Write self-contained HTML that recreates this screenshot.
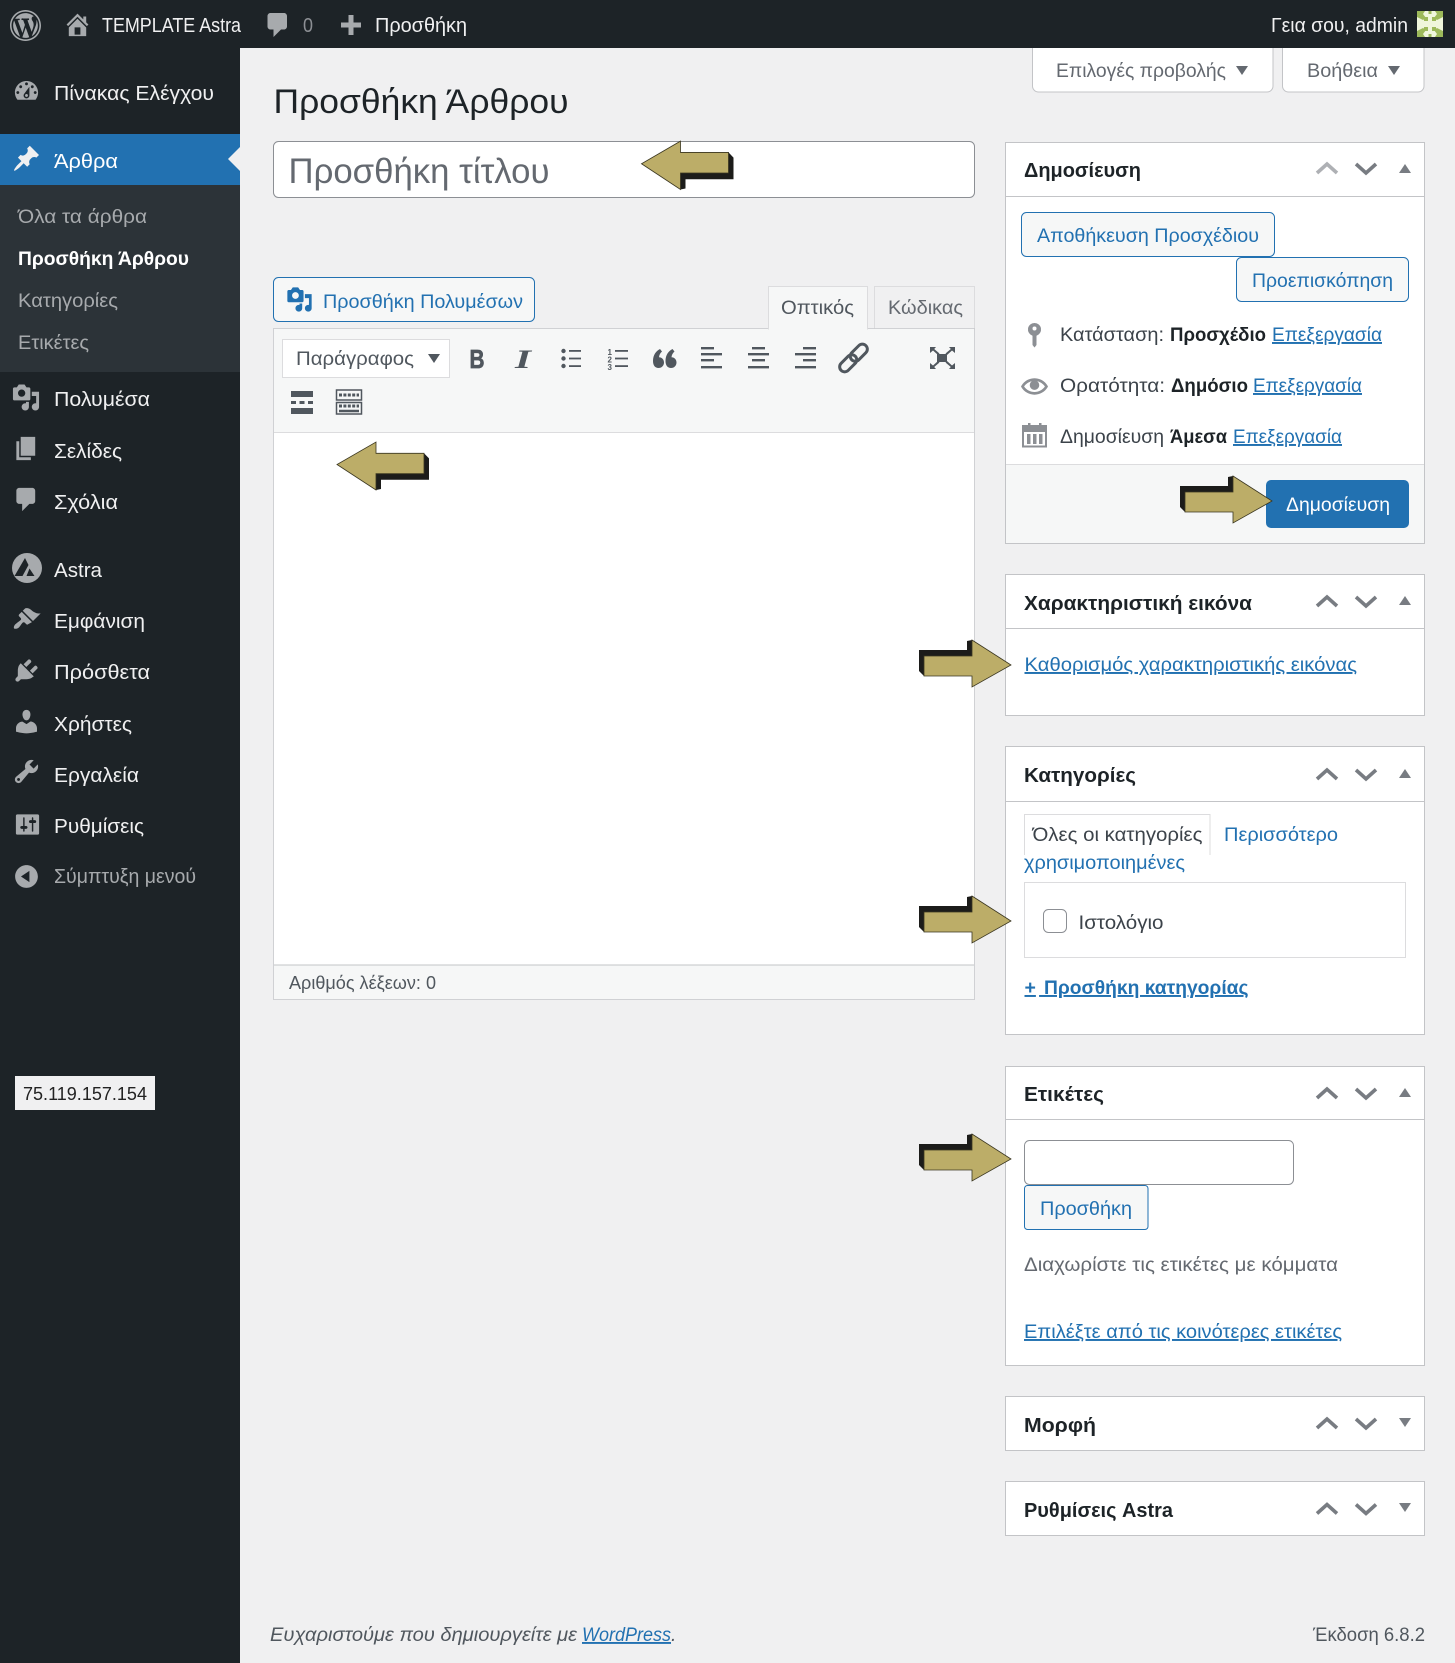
<!DOCTYPE html>
<html lang="el"><head><meta charset="utf-8"><title>Προσθήκη Άρθρου</title>
<style>
html,body{margin:0;padding:0;background:#f0f0f1;width:1455px;height:1663px;overflow:hidden}
svg{display:block;position:absolute;left:0;top:0;filter:blur(.3px)}
text{font-family:"Liberation Sans","Noto Sans CJK JP",sans-serif;font-size:19.5px;white-space:pre}
.w{fill:#f0f0f1;font-size:20px}.g{fill:#a7aaad}.c{fill:#3c434a}.k{fill:#1d2327}.b{font-weight:700}
.l{fill:#2271b1}.u{text-decoration:underline}.m{fill:#50575e}.h{font-weight:700;fill:#1d2327;font-size:20px}
.ic{fill:#a7aaad}
</style></head><body>
<svg width="1455" height="1663" viewBox="0 0 1455 1663" xmlns="http://www.w3.org/2000/svg">
<defs>
<path id="i-wp" d="M20 10c0-5.520-4.480-10-10-10S0 4.480 0 10s4.480 10 10 10 10-4.480 10-10zM10 1.010c4.970 0 8.990 4.020 8.990 8.990s-4.020 8.990-8.990 8.990S1.010 14.970 1.010 10 5.030 1.010 10 1.010zM8.010 14.820L4.960 6.610c.49-.03 1.050-.08 1.050-.08.43-.05.38-1.010-.06-.99 0 0-1.290.1-2.130.1-.15 0-.33 0-.52-.01 1.440-2.170 3.900-3.600 6.700-3.600 2.090 0 3.990.79 5.410 2.090-.6-.08-1.450.35-1.450 1.420 0 .66.38 1.220.79 1.880.31.54.5 1.220.5 2.210 0 1.340-1.270 4.480-1.270 4.480l-2.710-7.500c.48-.03.75-.16.75-.16.43-.05.38-1.100-.05-1.080 0 0-1.300.11-2.140.11-.78 0-2.110-.11-2.110-.11-.43-.02-.48 1.060-.05 1.080l.84.08 1.120 3.040zm6.020 2.150L16.640 10s.67-1.690.39-3.810c.63 1.140.94 2.420.94 3.810 0 2.960-1.560 5.580-3.940 6.970zM2.680 6.770L6.500 17.250c-2.670-1.300-4.470-4.080-4.470-7.250 0-1.160.2-2.230.65-3.230zm7.450 4.530l2.290 6.250c-.75.27-1.570.42-2.420.42-.72 0-1.410-.11-2.060-.3z"/>
<path id="i-home" d="M16 8.500l1.530 1.530-1.060 1.060L10 4.620l-6.470 6.470-1.060-1.060L10 2.500l4 4v-2h2v4zm-6-2.460l6 5.990V18H4v-5.970zM12 17v-5H8v5h4z"/>
<path id="i-cm" d="M5 2h9c1.100 0 2 .9 2 2v7c0 1.100-.9 2-2 2h-2l-5 5v-5H5c-1.100 0-2-.9-2-2V4c0-1.100.9-2 2-2z"/>
<path id="i-media" d="M13 11V4c0-.55-.45-1-1-1h-1.670L9 1H5L3.670 3H2c-.55 0-1 .45-1 1v7c0 .55.45 1 1 1h10c.55 0 1-.45 1-1zM7 4.500c1.380 0 2.500 1.120 2.500 2.500S8.380 9.500 7 9.500 4.500 8.380 4.500 7 5.620 4.500 7 4.500zM14 6h5v10.500c0 1.380-1.120 2.500-2.500 2.500S14 17.880 14 16.500s1.120-2.500 2.500-2.500c.17 0 .34.02.5.05V9h-3V6zm-4 8.050V13h2v3.500c0 1.380-1.120 2.500-2.500 2.500S7 17.880 7 16.500 8.120 14 9.500 14c.17 0 .34.02.5.05z"/>
<g id="arrow">
<path fill="#1c1c1a" d="M0 10H48V1L53 0V17H5V36L0 31Z"/>
<path fill="#bcad68" stroke="#3a3620" stroke-width=".8" d="M5 16H53V0L92 25 53 47V36H5Z"/>
</g>
<g id="up"><path fill="none" stroke="#787c82" stroke-width="3.600" d="M0 10 10 1 20 10"/></g>
<g id="dn"><path fill="none" stroke="#787c82" stroke-width="3.600" d="M0 1 10 10 20 1"/></g>
<path id="q" d="M660 349c-4 2-7 6-7 12 0 4.500 2.300 7 5.500 7s5.500-2.400 5.500-5.500-2.200-5.200-5-5.200c.2-2.300 1.200-4.300 3-5.800z"/>
</defs>

<!-- admin bar + sidebar -->
<rect x="0" y="0" width="1455" height="48" fill="#1d2327"/>
<rect x="0" y="48" width="240" height="1615" fill="#1d2327"/>
<rect x="0" y="134" width="240" height="51" fill="#2271b1"/>
<rect x="0" y="185" width="240" height="187" fill="#2c3338"/>
<path fill="#f0f0f1" d="M228 159 240 147V171Z"/>

<use href="#i-wp" class="ic" transform="translate(10,10) scale(1.55)"/>
<use href="#i-home" class="ic" transform="translate(63,10) scale(1.45)"/>
<text class="w" x="102" y="32" textLength="139" lengthAdjust="spacingAndGlyphs">TEMPLATE Astra</text>
<use href="#i-cm" class="ic" transform="translate(263,10) scale(1.5)"/>
<text x="303" y="32" textLength="10" lengthAdjust="spacingAndGlyphs" style="fill:#8c8f94;font-size:20px">0</text>
<path class="ic" d="M348.500 15h5v7.500h7.500v5h-7.500v7.500h-5v-7.500h-7.500v-5h7.500z"/>
<text class="w" x="375" y="32" textLength="92" lengthAdjust="spacingAndGlyphs">Προσθήκη</text>
<text class="w" x="1271" y="32" textLength="137" lengthAdjust="spacingAndGlyphs">Γεια σου, admin</text>
<rect x="1417" y="11" width="26" height="26" fill="#f0f6dc"/>
<g fill="#9db95a">
<path d="M1417 11h8l-2 3 3 4-3 2-6-3zM1443 11h-8l2 3-3 4 3 2 6-3zM1417 37h8l-2-3 3-4-3-2-6 3zM1443 37h-8l2-3-3-4 3-2 6 3z"/>
<rect x="1424" y="17" width="4" height="4"/><rect x="1432" y="17" width="4" height="4"/><rect x="1424" y="27" width="4" height="4"/><rect x="1432" y="27" width="4" height="4"/>
<rect x="1428.500" y="11" width="3" height="3"/><rect x="1428.500" y="34" width="3" height="3"/>
</g>

<!-- sidebar icons -->
<path class="ic" transform="translate(12,76.600) scale(1.45)" d="M3.760 16h12.480c1.100-1.370 1.760-3.110 1.760-5 0-4.420-3.580-8-8-8s-8 3.580-8 8c0 1.890.66 3.630 1.760 5zM10 4c.55 0 1 .45 1 1s-.45 1-1 1-1-.45-1-1 .45-1 1-1zM6 6c.55 0 1 .45 1 1s-.45 1-1 1-1-.45-1-1 .45-1 1-1zm8 0c.55 0 1 .45 1 1s-.45 1-1 1-1-.45-1-1 .45-1 1-1zm-5.370 5.550L12 7v6c0 1.100-.9 2-2 2s-2-.9-2-2c0-.57.24-1.080.63-1.450zM4 10c.55 0 1 .45 1 1s-.45 1-1 1-1-.45-1-1 .45-1 1-1zm12 0c.55 0 1 .45 1 1s-.45 1-1 1-1-.45-1-1 .45-1 1-1zm-5 3c0-.55-.45-1-1-1s-1 .45-1 1 .45 1 1 1 1-.45 1-1z"/>
<path fill="#f0f0f1" transform="translate(12,144) scale(1.45)" d="M10.440 3.020l1.820-1.820 6.360 6.350-1.830 1.820c-1.050-.68-2.480-.57-3.410.36l-.75.75c-.92.93-1.040 2.350-.35 3.410l-1.830 1.820-2.410-2.410-2.800 2.790c-.42.42-3.380 2.710-3.800 2.290s1.860-3.390 2.280-3.810l2.790-2.790L4.100 9.360l1.830-1.820c1.050.69 2.480.57 3.400-.36l.75-.75c.93-.92 1.050-2.350.36-3.410z"/>
<use href="#i-media" class="ic" transform="translate(11.500,383) scale(1.45)"/>
<path class="ic" transform="translate(12,434) scale(1.45)" d="M6 15V2h10v13H6zm-1 1h8v2H3V5h2v11z"/>
<use href="#i-cm" class="ic" transform="translate(12,485) scale(1.45)"/>
<circle class="ic" cx="27" cy="568" r="15"/>
<path fill="#1d2327" d="M14.500 576 25 558l3.500 7-6 11zM26.500 576l3-7.500 5 7.500z"/>
<path class="ic" transform="translate(12,605) scale(1.45)" d="M14.480 11.060L7.410 3.990l1.500-1.500c.5-.56 2.300-.47 3.510.32 1.210.8 1.430 1.280 2.910 2.100 1.180.64 2.450 1.260 4.450.85zm-.71.71L6.700 4.700 4.930 6.470c-.39.39-.39 1.020 0 1.410l1.060 1.060c.39.39.39 1.030 0 1.420-.6.6-1.430 1.110-2.210 1.690-.35.26-.7.53-1.010.84C1.430 13.710.96 15.650 1.500 16.180c.54.53 2.470.07 3.320-.79.31-.31.58-.66.84-1.010.58-.78 1.090-1.610 1.690-2.210.39-.39 1.020-.39 1.410 0l1.060 1.060c.39.39 1.020.39 1.410 0z"/>
<path class="ic" transform="translate(12,656) scale(1.45)" d="M13.110 4.360L9.870 7.600 8 5.730l3.240-3.240c.35-.34 1.050-.2 1.560.32.52.51.66 1.210.31 1.550zm-8 1.770l.91-1.120 9.010 9.010-1.190.84c-.71.71-2.630 1.160-3.820 1.160H6.140L4.900 17.260c-.59.59-1.540.59-2.120 0-.59-.58-.59-1.530 0-2.120l1.240-1.240v-3.880c0-1.130.4-3.190 1.090-3.890zm7.260 3.970l3.240-3.240c.34-.35 1.040-.21 1.550.31.52.51.66 1.210.31 1.550l-3.240 3.250z"/>
<path class="ic" transform="translate(12,707) scale(1.45)" d="M10 9.250c-2.270 0-2.730-3.440-2.730-3.440C7 4.020 7.820 2 9.970 2c2.160 0 2.980 2.020 2.710 3.810 0 0-.41 3.440-2.680 3.440zm0 2.570L12.720 10c2.390 0 4.520 2.330 4.520 4.530v2.490s-3.650 1.130-7.240 1.130c-3.650 0-7.240-1.130-7.240-1.130v-2.490c0-2.250 1.940-4.480 4.470-4.480z"/>
<path class="ic" transform="translate(12,757) scale(1.45)" d="M16.680 9.770c-1.340 1.340-3.300 1.670-4.950.99l-5.410 6.520c-.99.99-2.590.99-3.580 0s-.99-2.590 0-3.570l6.520-5.420c-.68-1.650-.35-3.610.99-4.950 1.280-1.280 3.120-1.620 4.720-1.060l-2.890 2.890 2.820 2.820 2.860-2.870c.53 1.580.18 3.390-1.080 4.650zM3.810 16.210c.4.39 1.040.39 1.430 0 .4-.4.4-1.040 0-1.430-.39-.4-1.030-.4-1.430 0-.39.39-.39 1.030 0 1.430z"/>
<path class="ic" transform="translate(13,810) scale(1.45)" d="M18 16V4c0-.55-.45-1-1-1H3c-.55 0-1 .45-1 1v12c0 .55.45 1 1 1h14c.55 0 1-.45 1-1zM8 11h1c.55 0 1 .45 1 1s-.45 1-1 1H8v1.500c0 .28-.22.5-.5.5s-.5-.22-.5-.5V13H6c-.55 0-1-.45-1-1s.45-1 1-1h1V5.500c0-.28.22-.5.5-.5s.5.22.5.5V11zm5-2h-1c-.55 0-1-.45-1-1s.45-1 1-1h1V5.500c0-.28.22-.5.5-.5s.5.22.5.5V7h1c.55 0 1 .45 1 1s-.45 1-1 1h-1v5.500c0 .28-.22.5-.5.5s-.5-.22-.5-.5V9z"/>
<path class="ic" transform="translate(12,862) scale(1.45)" d="M10 2.160c4.330 0 7.840 3.510 7.840 7.840s-3.510 7.840-7.840 7.840S2.160 14.330 2.160 10 5.710 2.160 10 2.160zm2 11.720V6.120L6.180 9.970z"/>

<!-- sidebar text -->
<text class="w" x="54" y="100" textLength="160" lengthAdjust="spacingAndGlyphs">Πίνακας Ελέγχου</text>
<text class="w" x="54" y="168" textLength="64" lengthAdjust="spacingAndGlyphs" style="fill:#fff">Άρθρα</text>
<text class="g" x="18" y="223" textLength="129" lengthAdjust="spacingAndGlyphs">Όλα τα άρθρα</text>
<text class="b" x="18" y="265" textLength="171" lengthAdjust="spacingAndGlyphs" style="fill:#fff">Προσθήκη Άρθρου</text>
<text class="g" x="18" y="307" textLength="100" lengthAdjust="spacingAndGlyphs">Κατηγορίες</text>
<text class="g" x="18" y="349" textLength="71" lengthAdjust="spacingAndGlyphs">Ετικέτες</text>
<text class="w" x="54" y="406" textLength="96" lengthAdjust="spacingAndGlyphs">Πολυμέσα</text>
<text class="w" x="54" y="458" textLength="68" lengthAdjust="spacingAndGlyphs">Σελίδες</text>
<text class="w" x="54" y="509" textLength="64" lengthAdjust="spacingAndGlyphs">Σχόλια</text>
<text class="w" x="54" y="577" textLength="48" lengthAdjust="spacingAndGlyphs">Astra</text>
<text class="w" x="54" y="628" textLength="91" lengthAdjust="spacingAndGlyphs">Εμφάνιση</text>
<text class="w" x="54" y="679" textLength="96" lengthAdjust="spacingAndGlyphs">Πρόσθετα</text>
<text class="w" x="54" y="731" textLength="78" lengthAdjust="spacingAndGlyphs">Χρήστες</text>
<text class="w" x="54" y="782" textLength="85" lengthAdjust="spacingAndGlyphs">Εργαλεία</text>
<text class="w" x="54" y="833" textLength="90" lengthAdjust="spacingAndGlyphs">Ρυθμίσεις</text>
<text class="g" x="54" y="883" textLength="142" lengthAdjust="spacingAndGlyphs" style="font-size:20px">Σύμπτυξη μενού</text>

<rect x="15" y="1076" width="140" height="34" fill="#f0f0f1"/>
<text x="23" y="1100" textLength="124" lengthAdjust="spacingAndGlyphs" style="font-size:18px;fill:#222">75.119.157.154</text>

<!-- screen tabs -->
<path fill="#fff" stroke="#c3c4c7" d="M1032.500 48V86a6 6 0 0 0 6 6H1267a6 6 0 0 0 6-6V48"/>
<path fill="#fff" stroke="#c3c4c7" d="M1282.500 48V86a6 6 0 0 0 6 6H1418a6 6 0 0 0 6-6V48"/>
<text x="1056" y="77" textLength="170" lengthAdjust="spacingAndGlyphs" style="fill:#646970">Επιλογές προβολής</text>
<path fill="#646970" d="M1236 66h12l-6 9z"/>
<text x="1307" y="77" textLength="71" lengthAdjust="spacingAndGlyphs" style="fill:#646970">Βοήθεια</text>
<path fill="#646970" d="M1388 66h12l-6 9z"/>

<!-- heading + title -->
<text class="k" x="273.500" y="113" textLength="295" lengthAdjust="spacingAndGlyphs" style="font-size:34px">Προσθήκη Άρθρου</text>
<rect x="273.500" y="141.500" width="701" height="56" rx="5" fill="#fff" stroke="#8c8f94"/>
<text x="288.500" y="183" textLength="261" lengthAdjust="spacingAndGlyphs" style="font-size:35px;fill:#646970">Προσθήκη τίτλου</text>
<use href="#arrow" transform="translate(733.500,189.500) rotate(180) scale(1,1.03)"/>

<!-- media button -->
<rect x="273.500" y="277.500" width="261" height="44" rx="5" fill="#f6f7f7" stroke="#2271b1"/>
<use href="#i-media" class="l" transform="translate(286,286) scale(1.35)" style="fill:#2271b1"/>
<text class="l" x="323" y="308" textLength="200" lengthAdjust="spacingAndGlyphs">Προσθήκη Πολυμέσων</text>

<!-- editor tabs -->
<rect x="874.500" y="286.500" width="100" height="43" fill="#f0f0f1" stroke="#dcdcde"/>
<text x="888" y="314" textLength="75" lengthAdjust="spacingAndGlyphs" style="fill:#646970">Κώδικας</text>

<!-- editor -->
<rect x="273.500" y="328.500" width="701" height="671" fill="#fff" stroke="#c3c4c7" stroke-opacity=".75"/>
<rect x="274" y="329" width="700" height="103" fill="#f6f7f7"/>
<line x1="274" x2="974" y1="432.500" y2="432.500" stroke="#dcdcde"/>
<path fill="#f6f7f7" stroke="#dcdcde" d="M768.500 329.500V286.500H867.500V329.500"/>
<rect x="769" y="325" width="98" height="5" fill="#f6f7f7"/>
<text x="781" y="314" textLength="73" lengthAdjust="spacingAndGlyphs" style="fill:#50575e">Οπτικός</text>

<rect x="282.500" y="339.500" width="167" height="38" fill="#fff" stroke="#dcdcde"/>
<text class="m" x="296" y="365" textLength="118" lengthAdjust="spacingAndGlyphs">Παράγραφος</text>
<path fill="#50575e" d="M428 354h12l-6 9z"/>

<!-- toolbar icons -->
<text x="469.500" y="368" textLength="15" lengthAdjust="spacingAndGlyphs" style="font-size:26px;font-weight:700;fill:#50575e;stroke:#50575e;stroke-width:.7">B</text>
<text x="515" y="368" textLength="16" lengthAdjust="spacingAndGlyphs" style="font-family:'Liberation Serif',serif;font-size:26px;font-weight:700;font-style:italic;fill:#50575e">I</text>
<g fill="#50575e">
<circle cx="563.500" cy="351" r="2.200"/><circle cx="563.500" cy="358.500" r="2.200"/><circle cx="563.500" cy="366" r="2.200"/>
<rect x="569" y="350" width="12" height="1.800"/><rect x="569" y="357.600" width="12" height="1.800"/><rect x="569" y="365.200" width="12" height="1.800"/>
<rect x="615" y="350" width="13" height="1.800"/><rect x="615" y="357.600" width="13" height="1.800"/><rect x="615" y="365.200" width="13" height="1.800"/>
<use href="#q"/><use href="#q" x="12.500"/>
<rect x="701" y="347" width="13" height="2.400"/><rect x="701" y="353" width="21" height="2.400"/><rect x="701" y="359" width="13" height="2.400"/><rect x="701" y="366" width="21" height="2.400"/>
<rect x="752" y="347" width="13" height="2.400"/><rect x="748" y="353" width="21" height="2.400"/><rect x="752" y="359" width="13" height="2.400"/><rect x="748" y="366" width="21" height="2.400"/>
<rect x="803" y="347" width="13" height="2.400"/><rect x="795" y="353" width="21" height="2.400"/><rect x="803" y="359" width="13" height="2.400"/><rect x="795" y="366" width="21" height="2.400"/>
<rect x="937" y="354" width="10" height="8"/>
<path d="M930 347h6l-1.800 2 5.300 4.500-1.500 1.500-5-4.500-3 2.500zM955 347h-6l1.800 2-5.300 4.500 1.500 1.500 5-4.500 3 2.500zM930 369h6l-1.800-2 5.300-4.500-1.500-1.500-5 4.500-3-2.500zM955 369h-6l1.800-2-5.300-4.500 1.500-1.500 5 4.500 3-2.500z"/>
<rect x="291" y="391" width="22" height="6"/><rect x="291" y="401" width="5" height="3"/><rect x="299.500" y="401" width="5" height="3"/><rect x="308" y="401" width="5" height="3"/><rect x="291" y="408" width="22" height="6"/>
</g>
<text x="607.500" y="355" style="font-size:8px;font-weight:700;fill:#50575e">1</text><text x="607.500" y="362.500" style="font-size:8px;font-weight:700;fill:#50575e">2</text><text x="607.500" y="370" style="font-size:8px;font-weight:700;fill:#50575e">3</text>
<g fill="none" stroke="#50575e" stroke-width="3" transform="rotate(-45 853.500 358)"><rect x="836" y="353" width="20" height="10" rx="5"/><rect x="851" y="353" width="20" height="10" rx="5"/></g>
<g fill="none" stroke="#50575e" stroke-width="1.500"><rect x="336.500" y="390" width="25" height="10"/><rect x="336.500" y="402.500" width="25" height="11.500"/></g>
<g fill="none" stroke="#50575e" stroke-width="3"><path stroke-dasharray="3 1.400" d="M339 395H359M339 406H359"/></g>
<path stroke="#50575e" stroke-width="2.500" d="M339 411H359"/>
<use href="#arrow" transform="translate(429,490) rotate(180) scale(1,1.02)"/>

<rect x="274" y="965" width="700" height="34" fill="#f6f7f7"/>
<line x1="274" x2="974" y1="965" y2="965" stroke="#c3c4c7"/>
<text class="m" x="289" y="989" textLength="147" lengthAdjust="spacingAndGlyphs" style="font-size:18px">Αριθμός λέξεων: 0</text>

<!-- Publish box -->
<rect x="1005.500" y="142.500" width="419" height="401" fill="#fff" stroke="#c3c4c7"/>
<line x1="1006" x2="1424" y1="196.500" y2="196.500" stroke="#c3c4c7"/>
<text class="h" x="1024" y="177" textLength="117" lengthAdjust="spacingAndGlyphs">Δημοσίευση</text>
<g transform="translate(1317,163)"><use href="#up" style="opacity:.6"/></g>
<use href="#dn" transform="translate(1356,163)"/>
<path fill="#787c82" d="M1399 173h12l-6-9z"/>
<rect x="1021.500" y="212.500" width="253" height="44" rx="5" fill="#f6f7f7" stroke="#2271b1"/>
<text class="l" x="1037" y="242" textLength="222" lengthAdjust="spacingAndGlyphs">Αποθήκευση Προσχέδιου</text>
<rect x="1236.500" y="257.500" width="172" height="44" rx="5" fill="#f6f7f7" stroke="#2271b1"/>
<text class="l" x="1252" y="287" textLength="141" lengthAdjust="spacingAndGlyphs">Προεπισκόπηση</text>

<path fill="#8c8f94" d="M1034.500 323a6.500 6.500 0 0 1 2 12.700V345l-2 2.500-2-2.500v-9.300a6.500 6.500 0 0 1 2-12.700zm0 3.500a2 2 0 1 0 0 4 2 2 0 0 0 0-4z"/>
<text class="c" x="1060" y="341" textLength="104" lengthAdjust="spacingAndGlyphs">Κατάσταση:</text>
<text class="b k" x="1170" y="341" textLength="96" lengthAdjust="spacingAndGlyphs">Προσχέδιο</text>
<text class="l u" x="1272" y="341" textLength="110" lengthAdjust="spacingAndGlyphs">Επεξεργασία</text>

<path fill="#8c8f94" transform="translate(1021,373) scale(1.35)" d="M19.700 9.400C17.700 6 14 3.900 10 3.900S2.300 6 .3 9.400L0 10l.3.6c2 3.400 5.700 5.500 9.700 5.500s7.700-2.100 9.700-5.500l.3-.6-.3-.6zM10 14.100c-3.100 0-6-1.600-7.700-4.100C3.600 8 5.700 6.600 8 6.100c-.9.6-1.500 1.700-1.500 2.900 0 1.900 1.600 3.500 3.500 3.500s3.500-1.600 3.500-3.500c0-1.200-.6-2.300-1.500-2.900 2.300.5 4.400 1.900 5.700 3.900-1.700 2.500-4.600 4.100-7.700 4.100z"/>
<text class="c" x="1060" y="392" textLength="105" lengthAdjust="spacingAndGlyphs">Ορατότητα:</text>
<text class="b k" x="1171" y="392" textLength="77" lengthAdjust="spacingAndGlyphs">Δημόσιο</text>
<text class="l u" x="1253" y="392" textLength="109" lengthAdjust="spacingAndGlyphs">Επεξεργασία</text>

<rect x="1023" y="426" width="23" height="20.500" fill="none" stroke="#8c8f94" stroke-width="2"/>
<rect x="1023" y="426" width="23" height="6" fill="#8c8f94"/>
<g fill="#8c8f94"><rect x="1028" y="423" width="2.500" height="6"/><rect x="1039" y="423" width="2.500" height="6"/><rect x="1027" y="434" width="3.500" height="10"/><rect x="1033" y="434" width="3.500" height="10"/><rect x="1039" y="434" width="3.500" height="10"/></g>
<text class="c" x="1060" y="443" textLength="104" lengthAdjust="spacingAndGlyphs">Δημοσίευση</text>
<text class="b k" x="1170" y="443" textLength="57" lengthAdjust="spacingAndGlyphs">Άμεσα</text>
<text class="l u" x="1233" y="443" textLength="109" lengthAdjust="spacingAndGlyphs">Επεξεργασία</text>

<rect x="1006" y="464" width="418" height="79" fill="#f6f7f7"/>
<line x1="1006" x2="1424" y1="464.500" y2="464.500" stroke="#dcdcde"/>
<rect x="1266" y="480" width="143" height="48" rx="5" fill="#2271b1"/>
<text x="1286" y="511" textLength="104" lengthAdjust="spacingAndGlyphs" style="fill:#fff">Δημοσίευση</text>
<use href="#arrow" transform="translate(1180,476)"/>

<!-- Featured -->
<rect x="1005.500" y="574.500" width="419" height="141" fill="#fff" stroke="#c3c4c7"/>
<line x1="1006" x2="1424" y1="628.500" y2="628.500" stroke="#c3c4c7"/>
<text class="h" x="1024" y="610" textLength="228" lengthAdjust="spacingAndGlyphs">Χαρακτηριστική εικόνα</text>
<use href="#up" transform="translate(1317,596)"/><use href="#dn" transform="translate(1356,596)"/>
<path fill="#787c82" d="M1399 605h12l-6-9z"/>
<text class="l u" x="1024.500" y="671" textLength="332.500" lengthAdjust="spacingAndGlyphs">Καθορισμός χαρακτηριστικής εικόνας</text>
<use href="#arrow" transform="translate(919,640)"/>

<!-- Categories -->
<rect x="1005.500" y="746.500" width="419" height="288" fill="#fff" stroke="#c3c4c7"/>
<line x1="1006" x2="1424" y1="801.500" y2="801.500" stroke="#c3c4c7"/>
<text class="h" x="1024" y="782" textLength="112" lengthAdjust="spacingAndGlyphs">Κατηγορίες</text>
<use href="#up" transform="translate(1317,769)"/><use href="#dn" transform="translate(1356,769)"/>
<path fill="#787c82" d="M1399 778h12l-6-9z"/>
<path fill="none" stroke="#dcdcde" d="M1024.500 855V814.500H1210V855"/>
<text class="c" x="1032.500" y="841" textLength="170" lengthAdjust="spacingAndGlyphs">Όλες οι κατηγορίες</text>
<text class="l" x="1224" y="841" textLength="114" lengthAdjust="spacingAndGlyphs">Περισσότερο</text>
<text class="l" x="1024" y="869" textLength="161" lengthAdjust="spacingAndGlyphs">χρησιμοποιημένες</text>
<rect x="1024.500" y="882.500" width="381" height="75" fill="#fff" stroke="#dcdcde"/>
<rect x="1043.500" y="909.500" width="23" height="23" rx="5" fill="#fff" stroke="#8c8f94"/>
<text class="c" x="1078.500" y="929" textLength="85" lengthAdjust="spacingAndGlyphs">Ιστολόγιο</text>
<text class="l u b" x="1024.500" y="994" textLength="20" lengthAdjust="spacing">+ </text>
<text class="l u b" x="1044" y="994" textLength="204.500" lengthAdjust="spacingAndGlyphs">Προσθήκη κατηγορίας</text>
<use href="#arrow" transform="translate(919,896)"/>

<!-- Tags -->
<rect x="1005.500" y="1066.500" width="419" height="299" fill="#fff" stroke="#c3c4c7"/>
<line x1="1006" x2="1424" y1="1119.500" y2="1119.500" stroke="#c3c4c7"/>
<text class="h" x="1024" y="1101" textLength="80" lengthAdjust="spacingAndGlyphs">Ετικέτες</text>
<use href="#up" transform="translate(1317,1088)"/><use href="#dn" transform="translate(1356,1088)"/>
<path fill="#787c82" d="M1399 1097h12l-6-9z"/>
<rect x="1024.500" y="1140.500" width="269" height="44" rx="5" fill="#fff" stroke="#8c8f94"/>
<rect x="1024.500" y="1185.500" width="123.500" height="44" rx="3" fill="#f6f7f7" stroke="#2271b1"/>
<text class="l" x="1040" y="1215" textLength="92" lengthAdjust="spacingAndGlyphs">Προσθήκη</text>
<text x="1024" y="1271" textLength="314" lengthAdjust="spacingAndGlyphs" style="fill:#646970">Διαχωρίστε τις ετικέτες με κόμματα</text>
<text class="l u" x="1024" y="1338" textLength="318" lengthAdjust="spacingAndGlyphs">Επιλέξτε από τις κοινότερες ετικέτες</text>
<use href="#arrow" transform="translate(919,1134)"/>

<!-- Format -->
<rect x="1005.500" y="1396.500" width="419" height="54" fill="#fff" stroke="#c3c4c7"/>
<text class="h" x="1024" y="1432" textLength="72" lengthAdjust="spacingAndGlyphs">Μορφή</text>
<use href="#up" transform="translate(1317,1418)"/><use href="#dn" transform="translate(1356,1418)"/>
<path fill="#787c82" d="M1399 1418h12l-6 9z"/>

<!-- Astra settings -->
<rect x="1005.500" y="1481.500" width="419" height="54" fill="#fff" stroke="#c3c4c7"/>
<text class="h" x="1024" y="1517" textLength="149" lengthAdjust="spacingAndGlyphs">Ρυθμίσεις Astra</text>
<use href="#up" transform="translate(1317,1503.500)"/><use href="#dn" transform="translate(1356,1503.500)"/>
<path fill="#787c82" d="M1399 1503h12l-6 9z"/>

<!-- Footer -->
<text class="m" x="270" y="1641" textLength="307" lengthAdjust="spacingAndGlyphs" style="font-style:italic;font-size:19px">Ευχαριστούμε που δημιουργείτε με</text>
<text class="l u" x="582" y="1641" textLength="89" lengthAdjust="spacingAndGlyphs" style="font-style:italic;font-size:19px">WordPress</text>
<text class="m" x="671" y="1641" style="font-style:italic;font-size:19px">.</text>
<text class="m" x="1313" y="1641" textLength="112" lengthAdjust="spacingAndGlyphs" style="font-size:19px">Έκδοση 6.8.2</text>
</svg>
</body></html>
